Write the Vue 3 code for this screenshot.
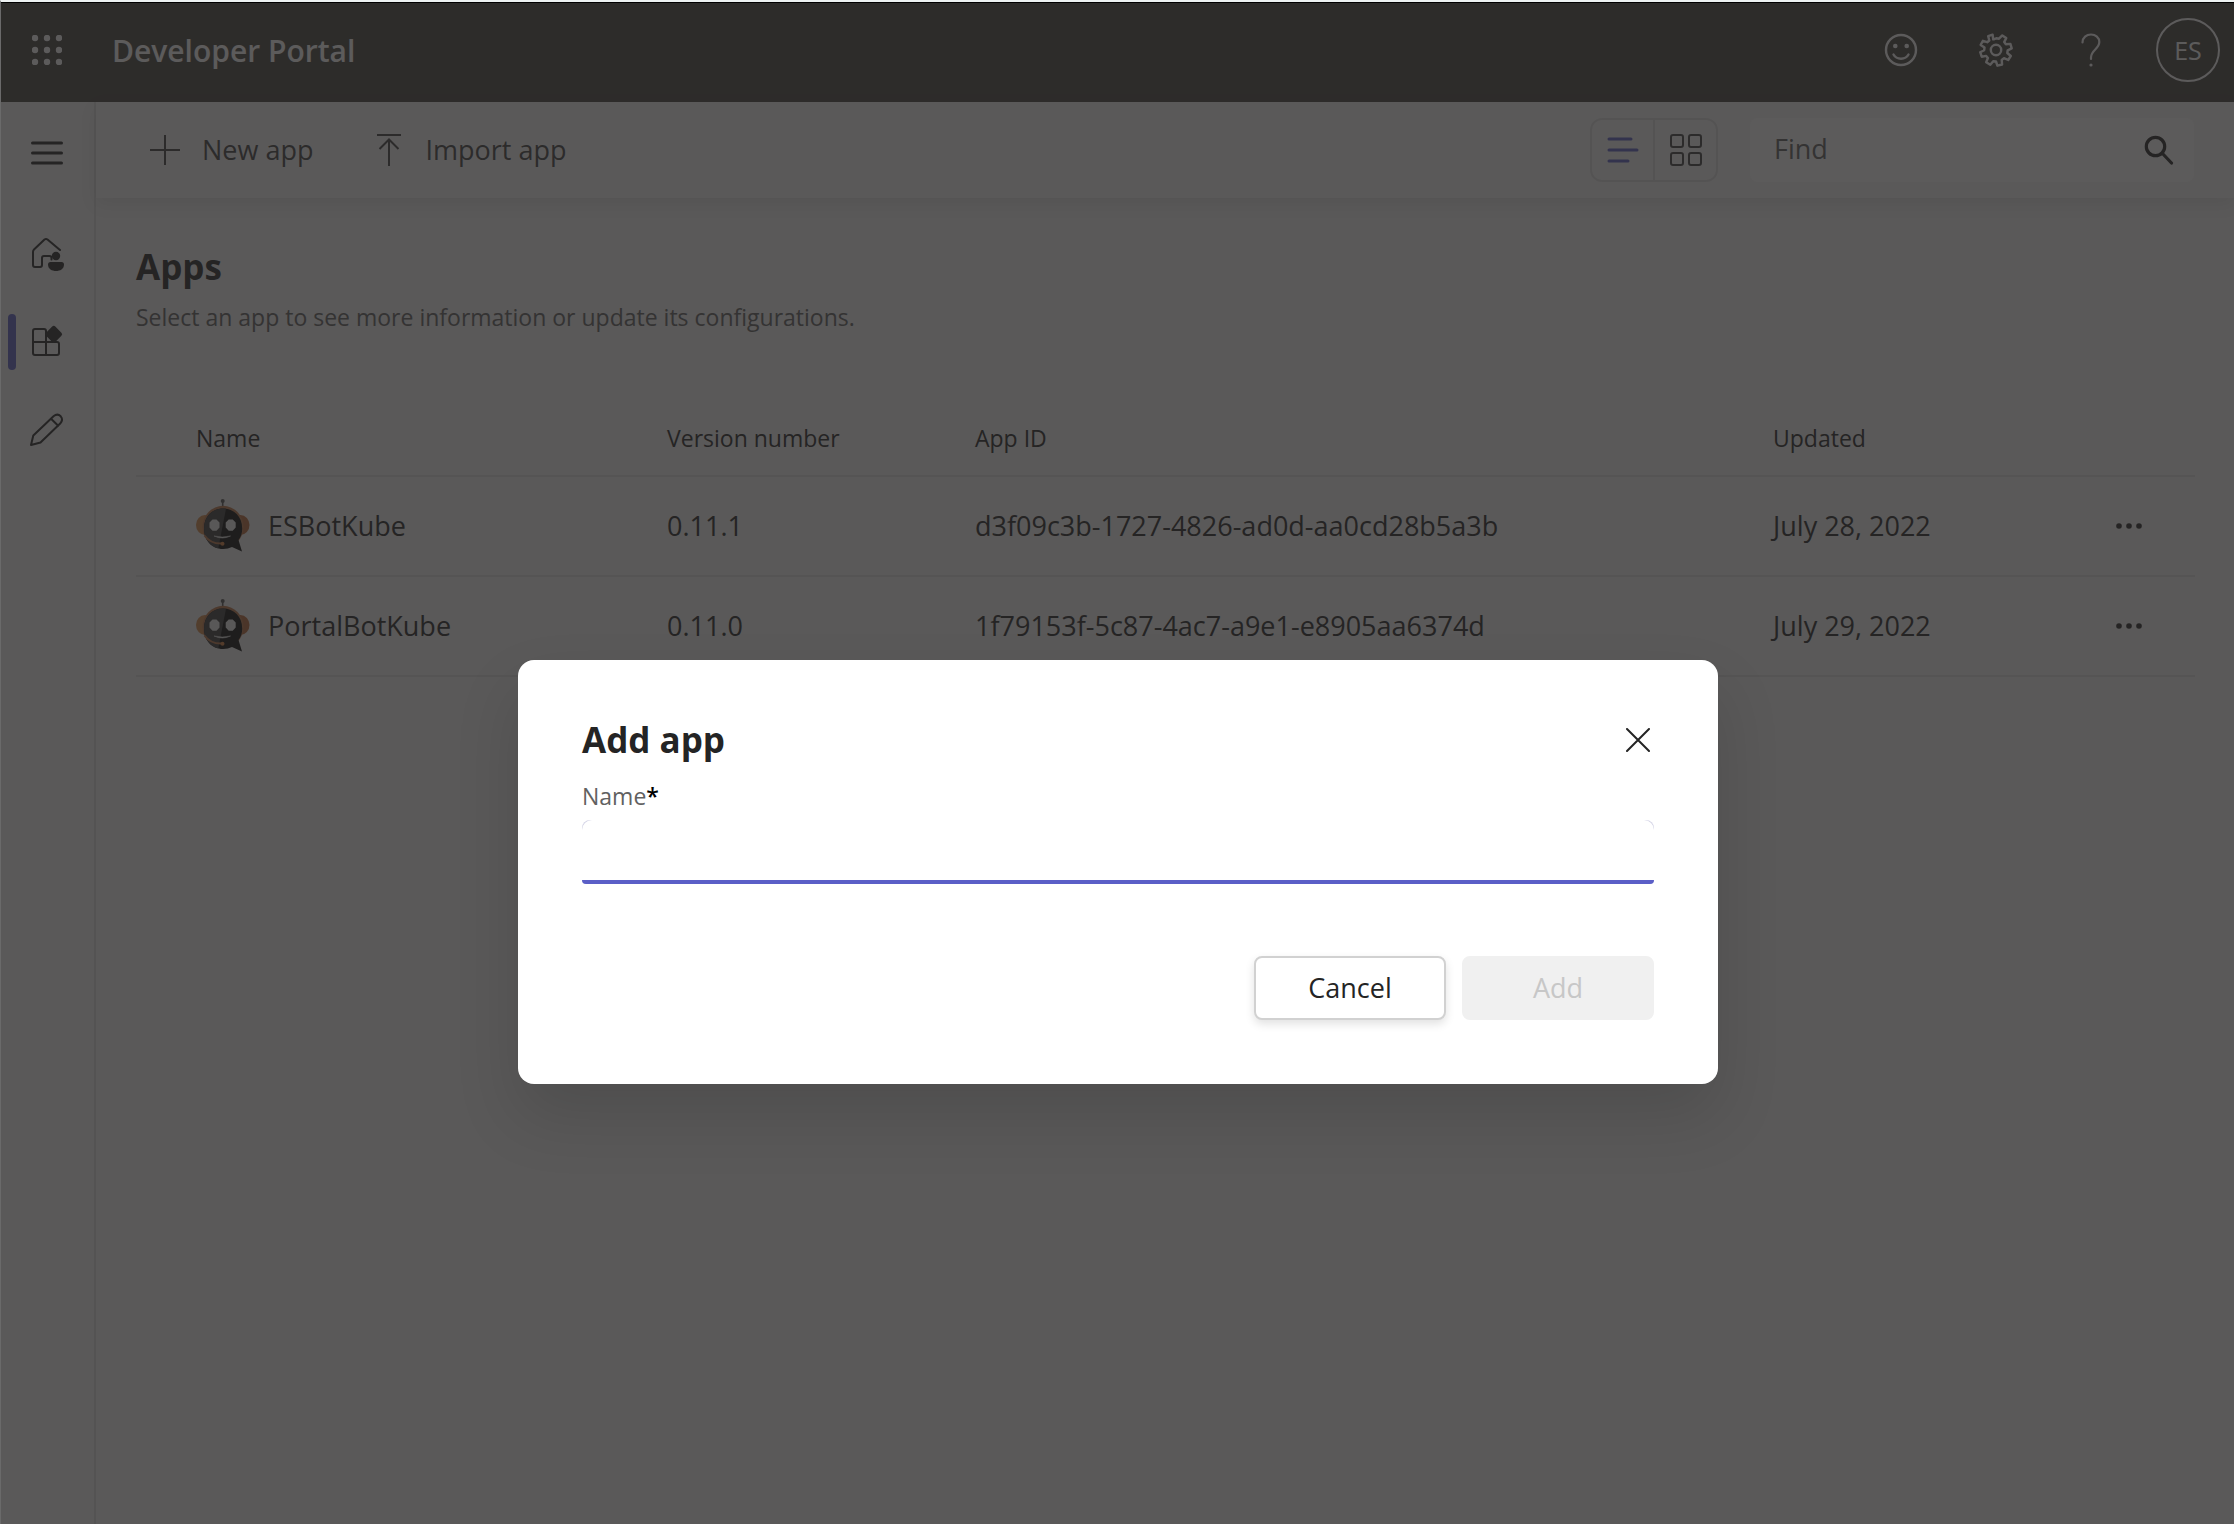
<script setup>
import { ref } from 'vue'

const apps = [
  { name: 'ESBotKube', version: '0.11.1', id: 'd3f09c3b-1727-4826-ad0d-aa0cd28b5a3b', updated: 'July 28, 2022' },
  { name: 'PortalBotKube', version: '0.11.0', id: '1f79153f-5c87-4ac7-a9e1-e8905aa6374d', updated: 'July 29, 2022' },
]
const find = ref('')
const newName = ref('')
</script>

<template>
  <div class="page">
    <header class="topbar">
      <button class="icon-button waffle" aria-label="App launcher">
        <svg width="30" height="30" viewBox="0 0 30 30" fill="currentColor">
          <template v-for="y in 3" :key="y">
            <circle v-for="x in 3" :key="x" :cx="x * 12 - 9" :cy="y * 12 - 9" r="3.2" />
          </template>
        </svg>
      </button>
      <span class="brand">Developer Portal</span>
      <nav class="top-actions" aria-label="Account">
        <button class="icon-button" aria-label="Feedback">
          <svg width="34" height="34" viewBox="0 0 34 34" fill="none" stroke="currentColor" stroke-width="2.4" stroke-linecap="round">
            <circle cx="17" cy="17" r="15" />
            <path d="M9.5 21.5c3 5.600 12 5.600 15 0" />
            <circle cx="11.300" cy="13" r="2.300" fill="currentColor" stroke="none" />
            <circle cx="22.700" cy="13" r="2.300" fill="currentColor" stroke="none" />
          </svg>
        </button>
        <button class="icon-button" aria-label="Settings">
          <svg width="34" height="34" viewBox="0 0 34 34" fill="none" stroke="currentColor" stroke-width="2.4" stroke-linejoin="round">
            <path d="M14.200 6.400 13.600 1.700 9.200 3.200 10.300 7.500 8.200 9.200 3.900 7.800 1.700 11.900 5.500 14.500 5.200 17.200 1.200 19.200 2.700 23.700 7.200 22.900 8.900 25 7.200 29.200 11.300 31.700 14.200 28.200 17 28.500 18.400 32.700 23.100 31.500 22.700 26.900 25 25.200 29.200 27 31.800 23 28.300 20 28.700 17.300 32.700 15.400 31.400 10.900 26.900 11.300 25.200 9.100 27.200 5.100 23.300 2.400 20 5.700 17.200 5.300 15.700 6Z" />
            <circle cx="17" cy="17" r="5.200" />
          </svg>
        </button>
        <button class="icon-button" aria-label="Help">
          <svg width="34" height="34" viewBox="0 0 34 34" fill="none" stroke="currentColor" stroke-width="2.2" stroke-linecap="round">
            <path d="M8.500 9.500C8.500 4.500 12.500 1.500 17 1.500c4.600 0 8.300 3 8.300 7.500C25.300 16 17 17 17 24.500V26" />
            <circle cx="17" cy="32" r="1.600" fill="currentColor" stroke="none" />
          </svg>
        </button>
        <button class="avatar" aria-label="Account ES">ES</button>
      </nav>
    </header>

    <div class="body">
      <aside class="rail">
        <button class="rail-menu" aria-label="Toggle navigation">
          <svg width="34" height="26" viewBox="0 0 34 26" stroke="currentColor" stroke-width="3" stroke-linecap="round">
            <path d="M2.500 3h29M2.500 13h29M2.500 23h29" />
          </svg>
        </button>
        <nav aria-label="Main">
          <a class="rail-link" href="#home" aria-label="Home">
            <svg class="rail-icon" viewBox="0 0 48 48" fill="none" stroke="currentColor" stroke-width="2" stroke-linecap="round" stroke-linejoin="round">
              <path d="M37 20 24.500 9.500q-1.500-1-3 0L11 19.500q-1 1-1 2.500v13q0 2 2 2h5q2 0 2-2v-7q0-2 2-2h5.500q2 0 2 2v1.500" />
              <circle cx="33" cy="26" r="4.200" fill="currentColor" stroke="none" />
              <path d="M27.500 32h11q2.500 0 2.500 2.500c0 4.500-4 6.500-8 6.500s-8-2-8-6.500q0-2.500 2.500-2.500Z" fill="currentColor" stroke="none" />
            </svg>
          </a>
          <a class="rail-link active" href="#apps" aria-label="Apps">
            <svg class="rail-icon" viewBox="0 0 48 48" fill="none" stroke="currentColor" stroke-width="2" stroke-linejoin="round">
              <path d="M21 11h-9q-2 0-2 2v22q0 2 2 2h22q2 0 2-2v-9q0-2-2-2H10M23 37V13q0-2-2-2" />
              <rect x="24.250" y="9.750" width="13" height="13" rx="2.200" transform="rotate(45 30.750 16.250)" fill="currentColor" stroke="none" />
            </svg>
          </a>
          <a class="rail-link" href="#tools" aria-label="Tools">
            <svg class="rail-icon" viewBox="0 0 48 48" fill="none" stroke="currentColor" stroke-width="2" stroke-linecap="round" stroke-linejoin="round">
              <path d="M8 39l2.300-9.500L30.500 10.300q4-3.300 7.200 0 2.900 3.200-.5 7.200L17.500 36.500ZM28 12.700l7.200 7" />
            </svg>
          </a>
        </nav>
      </aside>

      <div class="content">
        <div class="toolbar">
          <button class="command">
            <svg width="30" height="30" viewBox="0 0 30 30" stroke="currentColor" stroke-width="2"><path d="M15 0v30M0 15h30" /></svg>
            New app
          </button>
          <button class="command import">
            <svg width="24" height="32" viewBox="0 0 24 32" fill="none" stroke="currentColor" stroke-width="2"><path d="M0 1h24M12 32V5.500M2.500 15 12 5.500l9.500 9.500" /></svg>
            Import app
          </button>
          <div class="view-toggle" role="group" aria-label="View">
            <button class="selected" aria-label="List view">
              <svg width="32" height="32" viewBox="0 0 32 32" stroke="currentColor" stroke-width="3" stroke-linecap="round"><path d="M2 5h22M2 16h28M2 27h19" /></svg>
            </button>
            <button aria-label="Grid view">
              <svg width="32" height="32" viewBox="0 0 32 32" fill="none" stroke="currentColor" stroke-width="2">
                <rect x="1" y="1" width="12" height="12" rx="2" /><rect x="19" y="1" width="12" height="12" rx="2" />
                <rect x="1" y="19" width="12" height="12" rx="2" /><rect x="19" y="19" width="12" height="12" rx="2" />
              </svg>
            </button>
          </div>
          <div class="search">
            <input v-model="find" type="text" placeholder="Find" aria-label="Find" />
            <svg width="30" height="30" viewBox="0 0 30 30" fill="none" stroke="currentColor" stroke-width="3.200" stroke-linecap="round">
              <circle cx="11.500" cy="11.500" r="9.200" /><path d="M18.500 18.500 27.500 28" />
            </svg>
          </div>
        </div>

        <main>
          <h1>Apps</h1>
          <p class="subtitle">Select an app to see more information or update its configurations.</p>
          <table>
            <colgroup>
              <col class="col-name" /><col class="col-version" /><col /><col class="col-updated" /><col class="col-more" />
            </colgroup>
            <thead>
              <tr>
                <th scope="col">Name</th>
                <th scope="col">Version number</th>
                <th scope="col">App ID</th>
                <th scope="col">Updated</th>
                <th></th>
              </tr>
            </thead>
            <tbody>
              <tr v-for="app in apps" :key="app.id">
                <td>
                  <div class="app-name">
                    <svg width="54" height="54" viewBox="0 0 54 54">
                      <circle cx="26.700" cy="2" r="2" fill="#555" />
                      <path d="M26.700 2v7" stroke="#555" stroke-width="1.600" />
                      <ellipse cx="9" cy="26" rx="9" ry="10" fill="#d88a4a" />
                      <ellipse cx="44.500" cy="26" rx="9" ry="10" fill="#bd6a38" />
                      <ellipse cx="27" cy="28" rx="20.500" ry="21.200" fill="#c0784a" />
                      <path d="M27 9.500C16 9.500 8 17.500 8 29.500 8 41 16 50 27 50q5 0 9-2l10 4.500-3.500-11.500c2.500-3 3.700-7 3.700-11.500C46.200 17.500 38 9.500 27 9.500Z" fill="#080808" />
                      <path d="M30 9.700 22.300 49.500C13.500 47.500 8 39.500 8 29.500 8 17.500 16 9.500 27 9.500Z" fill="#3c3c3c" />
                      <path d="M16.500 20.500h4l3 3v5l-3 3.300h-4l-3-3.300v-5ZM32.700 20.500h4l3 3v5l-3 3.300h-4l-3-3.300v-5Z" fill="#f2f2f2" />
                      <path d="M18 37q8.500 2 16.500 0-8 4-16.500 0Z" fill="#f2f2f2" stroke="#e0e0e0" stroke-width=".600" />
                      <path d="M8.500 36.500Q14 44.500 25 44.600" fill="none" stroke="#c0784a" stroke-width="2" />
                      <circle cx="26.500" cy="44.700" r="2" fill="#d9803c" />
                    </svg>
                    {{ app.name }}
                  </div>
                </td>
                <td>{{ app.version }}</td>
                <td>{{ app.id }}</td>
                <td>{{ app.updated }}</td>
                <td>
                  <button class="icon-button more" :aria-label="'More options for ' + app.name">
                    <svg width="28" height="8" viewBox="0 0 28 8" fill="currentColor">
                      <circle cx="4" cy="4" r="2.800" /><circle cx="14" cy="4" r="2.800" /><circle cx="24" cy="4" r="2.800" />
                    </svg>
                  </button>
                </td>
              </tr>
            </tbody>
          </table>
        </main>
      </div>
    </div>

    <div class="backdrop">
      <form class="dialog" role="dialog" aria-modal="true" aria-labelledby="dialog-title" @submit.prevent>
        <div class="dialog-head">
          <h2 id="dialog-title">Add app</h2>
          <button type="button" class="icon-button close" aria-label="Close">
            <svg width="24" height="24" viewBox="0 0 24 24" stroke="currentColor" stroke-width="2" stroke-linecap="round"><path d="M1 1l22 22M23 1 1 23" /></svg>
          </button>
        </div>
        <label for="app-name">Name<span class="required">*</span></label>
        <div class="field">
          <input id="app-name" v-model="newName" type="text" required />
        </div>
        <div class="dialog-actions">
          <button type="button" class="button">Cancel</button>
          <button type="submit" class="button" disabled>Add</button>
        </div>
      </form>
    </div>
  </div>
</template>

<style>
body {
  background: #f5f5f5;
}
</style>

<style scoped>
.page {
  position: relative;
  display: flex;
  flex-direction: column;
  box-sizing: border-box;
  min-height: 100vh;
  border-top: 2px solid #edf2f2;
  border-left: 1px solid #6a6a6a;
  background: #f5f5f5;
  color: #242424;
  font: 27px/36px "Open Sans", "Noto Sans", sans-serif;
}
*,
*::before,
*::after {
  box-sizing: border-box;
}
button,
input {
  margin: 0;
  padding: 0;
  border: 0;
  background: none;
  color: inherit;
  font: inherit;
}
svg {
  display: block;
  flex: none;
}
h1,
h2 {
  margin: 0;
  font-size: 35px;
  line-height: 48px;
  font-weight: 700;
}
.icon-button {
  display: flex;
  align-items: center;
  justify-content: center;
}

.topbar {
  display: flex;
  align-items: center;
  height: 100px;
  padding: 0 14px 4px 0;
  background: #46433f;
  color: #fff;
}
.waffle {
  width: 92px;
}
.brand {
  margin-left: 19px;
  padding-top: 2px;
  font-size: 30px;
  font-weight: 600;
}
.top-actions {
  display: flex;
  align-items: center;
  gap: 61px;
  margin-left: auto;
}
.avatar {
  width: 64px;
  height: 64px;
  margin-left: -13px;
  border: 2px solid #fff;
  border-radius: 50%;
  font-size: 25px;
}

.body {
  display: flex;
  flex: 1;
}
.rail {
  flex: none;
  width: 95px;
  border-right: 2px solid #e0e0e0;
}
.rail-menu {
  display: flex;
  align-items: center;
  justify-content: center;
  width: 92px;
  height: 101px;
  margin-bottom: 7px;
}
.rail-link {
  position: relative;
  display: flex;
  align-items: center;
  justify-content: center;
  width: 92px;
  height: 88px;
  color: inherit;
}
.rail-icon {
  width: 48px;
  height: 48px;
}
.rail-link.active::before {
  content: "";
  position: absolute;
  left: 7px;
  width: 8px;
  height: 56px;
  border-radius: 4px;
  background: #5b5fc7;
}

.content {
  flex: 1;
  min-width: 0;
}
.toolbar {
  display: flex;
  align-items: center;
  height: 96px;
  padding: 0 40px 0 54px;
  background: #f8f8f8;
  box-shadow: 0 6px 16px rgba(0, 0, 0, 0.09);
}
.command {
  display: flex;
  align-items: center;
  gap: 22px;
  color: #424242;
}
.import {
  gap: 24px;
  margin-left: 64px;
}
.view-toggle {
  display: flex;
  height: 64px;
  margin-left: auto;
  border: 2px solid #e0e0e0;
  border-radius: 12px;
}
.view-toggle button {
  display: flex;
  align-items: center;
  justify-content: center;
  width: 61px;
  color: #424242;
}
.view-toggle .selected {
  width: 63px;
  border-right: 2px solid #e0e0e0;
  color: #5b5fc7;
}
.search {
  display: flex;
  align-items: center;
  width: 444px;
  height: 64px;
  margin-left: 32px;
  padding: 0 20px 0 24px;
  border-radius: 8px;
  background: #fff;
}
.search input {
  flex: 1;
  min-width: 0;
  padding-bottom: 2px;
  outline: none;
}
.search input::placeholder {
  color: #616161;
  opacity: 1;
}

main {
  padding: 45px 39px 40px 40px;
}
.subtitle {
  margin: 10px 0 68px;
  color: #616161;
  font-size: 23px;
  line-height: 32px;
}
table {
  width: 100%;
  border-collapse: separate;
  border-spacing: 0;
  table-layout: fixed;
}
.col-name {
  width: 531px;
}
.col-version {
  width: 308px;
}
.col-updated {
  width: 330px;
}
.col-more {
  width: 92px;
}
th,
td {
  height: 100px;
  padding: 0;
  border-bottom: 2px solid #e2e2e2;
  text-align: left;
  vertical-align: middle;
}
th {
  height: 76px;
  font-size: 23px;
  font-weight: 400;
}
th:first-child,
td:first-child {
  padding-left: 60px;
}
.app-name {
  display: flex;
  align-items: center;
  gap: 18px;
}
.more {
  width: 52px;
  height: 52px;
}

.backdrop {
  position: absolute;
  inset: 0;
  display: flex;
  justify-content: center;
  align-items: flex-start;
  padding: 657px 0 0 1px;
  border-top: 1px solid #000;
  background: rgba(37, 36, 36, 0.75);
}
.dialog {
  display: flex;
  flex-direction: column;
  width: 1200px;
  padding: 56px 64px 64px;
  border-radius: 16px;
  background: #fff;
  box-shadow: 0 32px 64px rgba(0, 0, 0, 0.13);
}
.dialog-head {
  display: flex;
  align-items: center;
  justify-content: space-between;
}
.close {
  width: 32px;
  height: 48px;
}
label {
  margin: 15px 0 7px;
  color: #616161;
  font-size: 23px;
  line-height: 34px;
}
.required {
  color: #000;
  font-weight: 600;
}
.field {
  display: flex;
  flex-direction: column;
  height: 64px;
  border-radius: 8px 8px 4px 4px;
  background: #d4d4e6;
  overflow: hidden;
}
.field input {
  height: 60px;
  padding: 0 24px;
  border-radius: 10px 10px 0 0;
  background: #fff;
  outline: none;
}
.field::after {
  content: "";
  height: 4px;
  background: #5b5fc7;
}
.dialog-actions {
  display: flex;
  justify-content: flex-end;
  gap: 16px;
  margin-top: 72px;
}
.button {
  width: 192px;
  height: 64px;
  border: 2px solid #d1d1d1;
  border-radius: 8px;
  background: #fff;
  box-shadow: 0 4px 10px rgba(0, 0, 0, 0.12);
}
.button:disabled {
  border-color: #f0f0f0;
  background: #f0f0f0;
  box-shadow: none;
  color: #c7c7c7;
}
</style>
